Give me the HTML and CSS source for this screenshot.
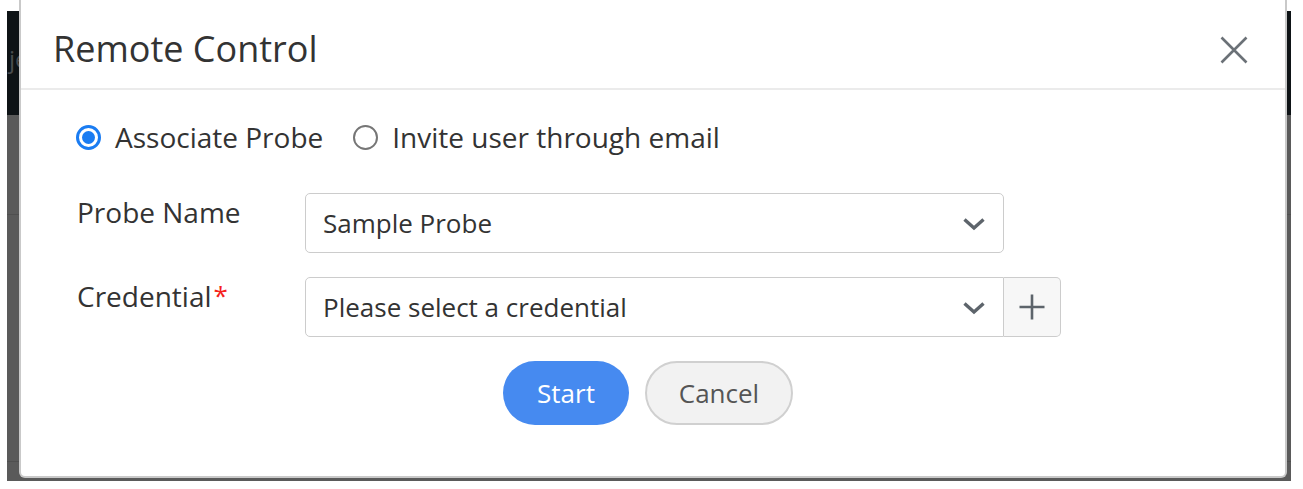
FILE: index.html
```html
<!DOCTYPE html>
<html lang="en">
<head>
<meta charset="utf-8">
<title>Remote Control</title>
<link rel="stylesheet" href="styles.css">
</head>
<body>
<div class="page">
  <div class="backdrop">
    <div class="bd-top"><span class="bd-text">je</span></div>
    <div class="bd-row bd-row-1"></div>
    <div class="bd-row bd-row-2"></div>
  </div>

  <div class="modal" role="dialog" aria-labelledby="modal-title">
    <div class="modal-header">
      <h1 class="modal-title" id="modal-title">Remote Control</h1>
      <button class="close-btn" type="button" aria-label="Close">
        <svg width="28" height="28" viewBox="0 0 28 28" aria-hidden="true">
          <path d="M1.5 1.5 L26.5 26.5 M26.5 1.5 L1.5 26.5" stroke="#6b7177" stroke-width="2.6" fill="none"/>
        </svg>
      </button>
    </div>

    <div class="modal-body">
      <div class="radio-group">
        <label class="radio-option">
          <span class="radio radio-checked"><span class="radio-dot"></span></span>
          <span class="radio-text">Associate Probe</span>
        </label>
        <label class="radio-option">
          <span class="radio"></span>
          <span class="radio-text">Invite user through email</span>
        </label>
      </div>

      <div class="form-row">
        <div class="form-label">Probe Name</div>
        <div class="select">
          <span class="select-value">Sample Probe</span>
          <svg class="chevron" width="24" height="14" viewBox="0 0 24 14" aria-hidden="true">
            <path d="M2.5 2.5 L12 11 L21.5 2.5" stroke="#5d646b" stroke-width="3.4" fill="none" stroke-linejoin="miter"/>
          </svg>
        </div>
      </div>

      <div class="form-row form-row-2">
        <div class="form-label">Credential<span class="required">*</span></div>
        <div class="input-group">
          <div class="select select-grouped">
            <span class="select-value">Please select a credential</span>
            <svg class="chevron" width="24" height="14" viewBox="0 0 24 14" aria-hidden="true">
              <path d="M2.5 2.5 L12 11 L21.5 2.5" stroke="#5d646b" stroke-width="3.4" fill="none" stroke-linejoin="miter"/>
            </svg>
          </div>
          <button class="add-btn" type="button" aria-label="Add credential">
            <svg width="26" height="26" viewBox="0 0 26 26" aria-hidden="true">
              <path d="M0.5 13 H25.5 M13 0.5 V25.5" stroke="#5d646b" stroke-width="2.6" fill="none"/>
            </svg>
          </button>
        </div>
      </div>

      <div class="actions">
        <button class="btn btn-primary" type="button">Start</button>
        <button class="btn btn-secondary" type="button">Cancel</button>
      </div>
    </div>
  </div>
</div>
</body>
</html>
```

FILE: styles.css
```css
* {
  box-sizing: border-box;
}

html, body {
  margin: 0;
  padding: 0;
  background: #ffffff;
}

body {
  font-family: "Open Sans", "Liberation Sans", sans-serif;
  color: #333333;
}

.page {
  position: relative;
  width: 1303px;
  height: 489px;
  padding: 11px 0 0 7px;
  background: #ffffff;
  overflow: hidden;
}

/* dimmed page behind the dialog */
.backdrop {
  width: 1284px;
  height: 470px;
  background: #5a5a5a;
  overflow: hidden;
  display: flex;
  flex-direction: column;
}

.bd-top {
  height: 104px;
  flex: none;
  background: #0e1316;
  padding-top: 33px;
}

.bd-text {
  display: block;
  font-size: 24px;
  line-height: 30px;
  color: #4a4d50;
  margin-left: 2px;
}

.bd-row {
  flex: none;
  border-bottom: 1px solid #4f4f4f;
}

.bd-row-1 {
  height: 100px;
}

.bd-row-2 {
  height: 247px;
}

/* dialog */
.modal {
  position: absolute;
  left: 19px;
  top: 0;
  width: 1268px;
  height: 478px;
  background: #ffffff;
  border: 2px solid #c9c9c9;
  border-top: none;
  border-radius: 0 0 6px 6px;
}

.modal-header {
  height: 90px;
  padding: 27px 37px 0 32px;
  border-bottom: 2px solid #ebebeb;
  display: flex;
  justify-content: space-between;
  align-items: flex-start;
}

.modal-title {
  margin: 0;
  font-size: 36px;
  font-weight: 400;
  line-height: 43px;
  color: #333333;
}

.close-btn {
  margin-top: 9px;
  padding: 0;
  border: none;
  background: none;
  width: 28px;
  height: 28px;
  display: block;
}

.close-btn svg {
  display: block;
}

.modal-body {
  padding: 27px 55px 51px 55px;
}

.radio-group {
  display: flex;
  align-items: center;
  gap: 30px;
  height: 40px;
}

.radio-option {
  display: flex;
  align-items: center;
  gap: 14px;
}

.radio {
  width: 25px;
  height: 25px;
  border-radius: 50%;
  border: 2px solid #767676;
  display: flex;
  align-items: center;
  justify-content: center;
  flex: none;
}

.radio-checked {
  border: 3px solid #1a7cf2;
}

.radio-dot {
  width: 13px;
  height: 13px;
  border-radius: 50%;
  background: #1a7cf2;
}

.radio-text {
  font-size: 28px;
  line-height: 40px;
  color: #333333;
}

.form-row {
  display: flex;
  align-items: flex-start;
  margin-top: 36px;
}

.form-row-2 {
  margin-top: 24px;
}

.form-label {
  width: 229px;
  flex: none;
  font-size: 28px;
  line-height: 40px;
  margin-top: -1px;
  padding-left: 1px;
  color: #333333;
}

.required {
  color: #f5221b;
  font-size: 26px;
  margin-left: 2px;
  position: relative;
  top: -2px;
}

.select {
  width: 699px;
  height: 60px;
  border: 1px solid #cccccc;
  border-radius: 5px;
  background: #ffffff;
  display: flex;
  align-items: center;
  justify-content: space-between;
  padding: 0 17px 0 17px;
}

.select-value {
  font-size: 26px;
  line-height: 36px;
  color: #333333;
}

.chevron {
  display: block;
  margin-top: 2px;
}

.input-group {
  display: flex;
}

.select-grouped {
  border-radius: 5px 0 0 5px;
}

.add-btn {
  width: 57px;
  height: 60px;
  padding: 0;
  border: 1px solid #cccccc;
  border-left: none;
  border-radius: 0 5px 5px 0;
  background: #f7f7f7;
  display: flex;
  align-items: center;
  justify-content: center;
}

.add-btn svg {
  display: block;
}

.actions {
  display: flex;
  justify-content: center;
  gap: 16px;
  margin-top: 24px;
  padding-right: 10px;
}

.btn {
  height: 64px;
  border-radius: 32px;
  font-family: "Open Sans", "Liberation Sans", sans-serif;
  font-size: 26px;
  line-height: 36px;
  padding: 0;
  cursor: pointer;
}

.btn-primary {
  width: 126px;
  background: #468af0;
  border: none;
  color: #ffffff;
}

.btn-secondary {
  width: 148px;
  background: #f2f2f2;
  border: 2px solid #d0d0d0;
  color: #555555;
}
```
